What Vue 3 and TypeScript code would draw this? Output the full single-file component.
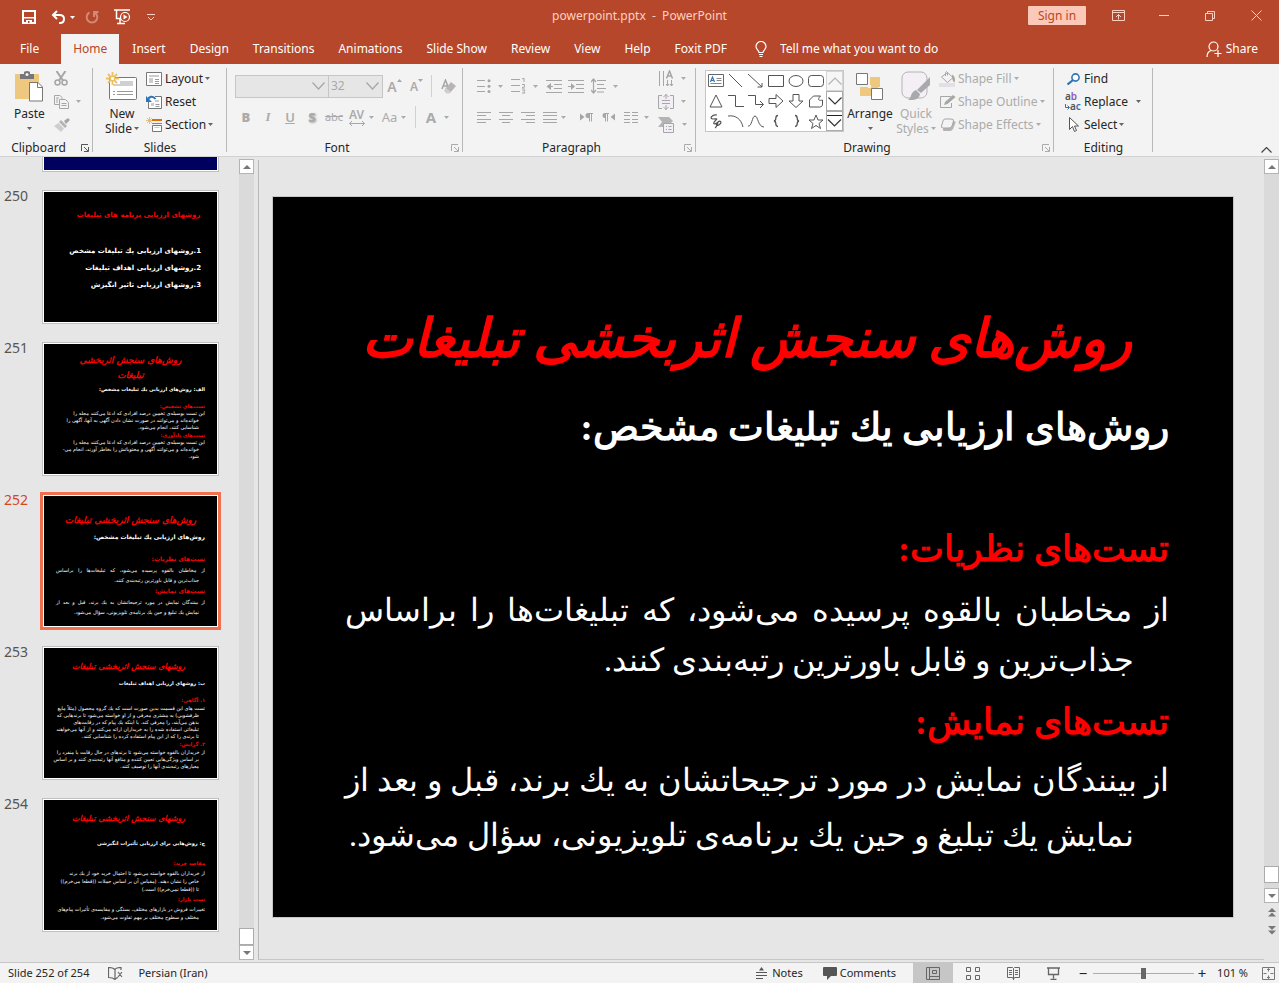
<script setup lang="ts">
import { h, ref } from 'vue'

interface Glyph { w: number; h: number; body: string }

const glyphs: Record<string, Glyph> = {
  save: { w: 14, h: 14, body: '<path d="M1 1h12v12H1z" fill="none" stroke="#fff" stroke-width="2"/><path d="M2 7h10v1.500H2z" fill="#fff"/><path d="M4 10h6v3H4z" fill="#fff"/><path d="M6 11h1.500v2H6z" fill="#b7472a"/>' },
  undo: { w: 15, h: 14, body: '<path d="M6 1L2 5l4 4M2 5h6.500c3 0 4.500 1.500 4.500 4s-1.500 4-4 4H8" fill="none" stroke="#fff" stroke-width="2"/>' },
  redo: { w: 14, h: 14, body: '<path d="M4.500 2.500a5.300 5.300 0 1 0 5 0M9 7V2h4.500" fill="none" stroke="#d08a76" stroke-width="2"/>' },
  present: { w: 17, h: 16, body: '<path d="M0 1h16M2.500 1v8.500H7M6 10v4M3 14.500h8" fill="none" stroke="#fff" stroke-width="1.500"/><circle cx="11" cy="8" r="4.500" fill="#b7472a" stroke="#fff" stroke-width="1.200"/><path d="M9.500 5.500v5l4-2.500z" fill="#fff"/>' },
  custom: { w: 8, h: 7, body: '<path d="M0 .500h8M1 3l3 3 3-3" fill="none" stroke="#fcd0c2"/>' },
  caret: { w: 5, h: 3, body: '<path d="M0 0h5L2.500 3z" fill="currentColor"/>' },
  ribbonOpt: { w: 13, h: 11, body: '<path d="M.500.500h12v10H.500zM.500 2.500h12M6.500 9.500V4.500M4 7l2.500-2.500L9 7" fill="none" stroke="#fcd0c2"/>' },
  min: { w: 10, h: 10, body: '<path d="M0 4.500h10" stroke="#fcd0c2"/>' },
  restore: { w: 10, h: 10, body: '<path d="M.500 2.500h7v7h-7zM2.500 2V.500h7v7H8" fill="none" stroke="#fcd0c2"/>' },
  close: { w: 11, h: 11, body: '<path d="M.500.500l10 10M10.500.500l-10 10" stroke="#fcd0c2" fill="none"/>' },
  bulb: { w: 12, h: 17, body: '<path d="M4 11.500c0-2-3-3-3-6a5 5 0 0 1 10 0c0 3-3 4-3 6zM4 13.500h4M4.500 15.500h3" fill="none" stroke="#fff" stroke-width="1.200"/>' },
  person: { w: 16, h: 17, body: '<circle cx="7.500" cy="5.500" r="4.500" fill="none" stroke="#fff" stroke-width="1.200"/><path d="M1 16c0-4 2-6 4.500-6.500M12 9v7M8.500 12.500h7" fill="none" stroke="#fff" stroke-width="1.200"/>' },
  paste: { w: 28, h: 31, body: '<path d="M0 3h24v25H0z" fill="#edc87e"/><path d="M5 3h4V1.500Q9 0 12 0t3 1.500V3h4v5H5z" fill="#777"/><circle cx="12" cy="3.500" r="1.500" fill="#f3f3f3"/><path d="M14.500 11.500h8.500l4.500 4.500v14h-13z" fill="#fff" stroke="#777"/><path d="M22.500 12v4.500H27" fill="none" stroke="#777"/>' },
  cut: { w: 14, h: 15, body: '<path d="M2.500 0l6.500 9.500M11.500 0L5 9.500" fill="none" stroke="#a6a6a6" stroke-width="2"/><circle cx="3.500" cy="11.500" r="2.500" fill="none" stroke="#a6a6a6" stroke-width="1.500"/><circle cx="10.500" cy="11.500" r="2.500" fill="none" stroke="#a6a6a6" stroke-width="1.500"/>' },
  copy: { w: 15, h: 14, body: '<path d="M6 9.500H.500V.500H6l2 2V4M5.500 4.500h6l3 3v6h-9zM2 3h3M2 5h2M2 7h2M7.500 8.500h5M7.500 10.500h5" fill="none" stroke="#a6a6a6"/>' },
  painter: { w: 16, h: 14, body: '<path d="M10 3l4-3 2 2-4 4z" fill="#a6a6a6"/><path d="M7 2l6 6-2 2-6-6z" fill="#b4b4b4"/><path d="M4.500 5l5.500 5.500L7 14 0 8z" fill="#d0cdd0"/>' },
  newSlide: { w: 31, h: 29, body: '<path d="M3.500 5.500h26q1 0 1 1v20q0 1-1 1h-25q-1 0-1-1z" fill="#fff" stroke="#777"/><path d="M14 9h13v5H7v-2h7z" fill="#d0d0d0"/><path d="M7 19.500h2M11 19.500h16M7 22.500h2M11 22.500h16" stroke="#999"/><path d="M6.500 0v13M0 6.500h13M2 2l9 9M11 2l-9 9" stroke="#edc060" stroke-width="1.800"/><circle cx="6.500" cy="6.500" r="2.200" fill="#fff" stroke="#edc060" stroke-width="1.200"/>' },
  layout: { w: 16, h: 14, body: '<path d="M.500.500h15v13H.500z" fill="#fff" stroke="#777"/><path d="M3 3h10v2H3zM3 6h4v5H3z" fill="#ccc"/><path d="M9 7.500h4M9 9.500h4M9 11.500h4" stroke="#999"/>' },
  reset: { w: 16, h: 14, body: '<path d="M2.500 4.500v9h13v-12H9" fill="#fff" stroke="#777"/><path d="M9 5h4v2H9zM5 8h3v3H5z" fill="#ccc"/><path d="M9.500 9.500h4M9.500 11.500h4" stroke="#999"/><path d="M1.500 5.500C3 1 7 .500 9.500 4" stroke="#2e75b6" stroke-width="2" fill="none"/><path d="M0 1v6h6z" fill="#2e75b6"/>' },
  section: { w: 16, h: 15, body: '<path d="M3.500 0v7M0 3.500h7M1 1l5 5M6 1L1 6" stroke="#edc060"/><path d="M6 3h10" stroke="#e36c0a" stroke-width="2"/><path d="M6 6.500h10" stroke="#e36c0a"/><path d="M6.500 8.500h9v6h-9z" fill="#fff" stroke="#777"/><path d="M8.500 10h5v1h-5z" fill="#ccc"/>' },
  chev: { w: 13, h: 8, body: '<path d="M.500.500l6 6.500 6-6.500" fill="none" stroke="#a6a6a6" stroke-width="1.200"/>' },
  grow: { w: 6, h: 4, body: '<path d="M0 3h5L2.500 0z" fill="#a6a6a6"/>' },
  shrink: { w: 6, h: 4, body: '<path d="M0 0h5L2.500 3z" fill="#a6a6a6"/>' },
  eraser: { w: 15, h: 15, body: '<path d="M1 10L4.500 1l3 8M2 7h4" stroke="#a6a6a6" stroke-width="1.500" fill="none"/><path d="M10 3l5 4-6 7-5-4z" fill="#b8b4b8"/><path d="M4.500 8.500l5 4-1.500 2H5.500L3 12z" fill="#d0ccd0"/>' },
  kern: { w: 16, h: 5, body: '<path d="M.500 2.500h15M3 0L.500 2.500 3 5M13 0l2.500 2.500L13 5" fill="none" stroke="#a6a6a6"/>' },
  bullets: { w: 14, h: 14, body: '<path d="M0 1.500h8M0 7.500h8M0 12.500h8" stroke="#a6a6a6"/><circle cx="12" cy="1.700" r="1.500" fill="#a6a6a6"/><circle cx="12" cy="7.200" r="1.500" fill="#a6a6a6"/><circle cx="12" cy="12.500" r="1.500" fill="#a6a6a6"/>' },
  numbers: { w: 15, h: 16, body: '<path d="M0 1.500h9M0 7.500h9M0 13.500h9M11 1l2-1v4M11 6.500h2.500v2L11 10h3M11 12h3l-1 1.500 1 1.500h-3" fill="none" stroke="#a6a6a6"/>' },
  outdent: { w: 16, h: 13, body: '<path d="M0 .500h16M8 4.500h8M8 8.500h8M0 12.500h16M1 6.500h6" fill="none" stroke="#a6a6a6" stroke-width="1.200"/><path d="M5 3L.500 6.500 5 10z" fill="#a6a6a6"/>' },
  indent: { w: 16, h: 13, body: '<path d="M0 .500h16M8 4.500h8M8 8.500h8M0 12.500h16M0 6.500h6" fill="none" stroke="#a6a6a6" stroke-width="1.200"/><path d="M3 3l4 3.500L3 10z" fill="#a6a6a6"/>' },
  spacing: { w: 15, h: 16, body: '<path d="M6 2.500h9M6 6.500h7M6 10.500h9M6 14h7M2.500 1v14M0 4l2.500-3L5 4M0 12l2.500 3L5 12" fill="none" stroke="#a6a6a6" stroke-width="1.200"/>' },
  alignL: { w: 14, h: 11, body: '<path d="M0 .500h14M0 3.500h9M0 7.500h14M0 10.500h9" stroke="#a6a6a6"/>' },
  alignC: { w: 14, h: 11, body: '<path d="M0 .500h14M3 3.500h8M0 7.500h14M3 10.500h8" stroke="#a6a6a6"/>' },
  alignR: { w: 14, h: 11, body: '<path d="M0 .500h14M5 3.500h9M0 7.500h14M5 10.500h9" stroke="#a6a6a6"/>' },
  alignJ: { w: 14, h: 11, body: '<path d="M0 .500h14M0 3.500h14M0 7.500h14M0 10.500h14" stroke="#a6a6a6"/>' },
  ltr: { w: 13, h: 9, body: '<path d="M0 .500L4.500 4 0 7.500zM9 0v5H8a2.500 2.500 0 0 1 0-5z" fill="#a6a6a6"/><path d="M8 .500h5M9.500.500v8M11.500.500v8" stroke="#a6a6a6"/>' },
  rtl: { w: 13, h: 9, body: '<path d="M13 .500L8.500 4 13 7.500zM3 0v5a2.500 2.500 0 0 1 0-5z" fill="#a6a6a6"/><path d="M2 .500h5M3.500.500v8M5.500.500v8" stroke="#a6a6a6"/>' },
  columns: { w: 14, h: 11, body: '<path d="M0 .500h6M0 3.500h6M0 7.500h6M0 10.500h6M8 .500h6M8 3.500h6M8 7.500h6M8 10.500h6" stroke="#a6a6a6"/>' },
  textDir: { w: 16, h: 17, body: '<path d="M1.500 1v15M5.500 1v15M9.500 10v6M13.500 10v6M8 14l1.500 2 1.500-2M12 14l1.500 2 1.500-2" fill="none" stroke="#a6a6a6"/><path d="M8.500 8.500L11.500 1l3 7.500M9.500 6h4" fill="none" stroke="#a6a6a6" stroke-width="1.500"/>' },
  alignText: { w: 16, h: 16, body: '<path d="M1 2h14v12H1z" fill="#f3edf5"/><path d="M4 1.500H.500v13H4M12 1.500h3.500v13H12M4 6.500h8M4 9.500h8M8 0v5M5.500 3L8 .500 10.500 3M8 16v-5M5.500 13L8 15.500l2.500-2.500" fill="none" stroke="#a6a6a6"/>' },
  smart: { w: 17, h: 16, body: '<path d="M0 0h11l4 4-2 2H7v4H0l4-5z" fill="#b4b4b4"/><path d="M5.500 6.500h10v9h-10z" fill="#f3edf5" stroke="#a6a6a6"/><path d="M8 9.500h1M10.500 9.500h3M8 12.500h1M10.500 12.500h3" stroke="#a6a6a6"/>' },
  textBox: { w: 16, h: 14, body: '<path d="M.500.500h15v12H.500z" fill="none" stroke="#666"/><path d="M2.500 8L4.500 3l2 5M3 6.500h3" stroke="#2e75b6" stroke-width="1.200" fill="none"/><path d="M8.500 4.500h5M8.500 6.500h5M2.500 9.500h11" stroke="#888"/>' },
  line: { w: 16, h: 14, body: '<path d="M1 0l13 13" stroke="#555"/>' },
  lineArrow: { w: 16, h: 14, body: '<path d="M0 0l14 13M14 9v4H9.500" stroke="#555" fill="none"/>' },
  rect: { w: 16, h: 14, body: '<path d="M.500 1.500h15v11H.500z" stroke="#555" fill="none"/>' },
  oval: { w: 16, h: 14, body: '<ellipse cx="8" cy="7" rx="7" ry="5.500" stroke="#555" fill="none"/>' },
  round: { w: 16, h: 14, body: '<rect x=".500" y="1.500" width="15" height="11" rx="3" stroke="#555" fill="none"/>' },
  triangle: { w: 16, h: 14, body: '<path d="M8 1l6 12H2z" stroke="#555" fill="none"/>' },
  elbow: { w: 16, h: 14, body: '<path d="M0 1.500h7.500v11H16" stroke="#555" fill="none"/>' },
  elbowArrow: { w: 16, h: 14, body: '<path d="M0 1.500h7.500v9H15M12 7l3.500 3.500L12 14" stroke="#555" fill="none"/>' },
  arrowR: { w: 16, h: 14, body: '<path d="M1 4.500h7V.500l7 6.500-7 6.500V9.500H1z" stroke="#555" fill="none"/>' },
  arrowD: { w: 16, h: 14, body: '<path d="M5 .500h6V7h4l-7 6.500L1 7h4z" stroke="#555" fill="none"/>' },
  freeform: { w: 16, h: 14, body: '<path d="M1.500 13V6l4-4h7c-4 4-1 5 2 4v4c0 2-1 3-3 3z" stroke="#555" fill="none"/>' },
  scribble: { w: 16, h: 15, body: '<path d="M9 1c-5-1-8 4-4 4s5-1 2 2 0 4 3 1c2-2 4 0 2 2s-5 2-3-1c2-3 0 4-2 5" stroke="#555" fill="none" stroke-width="1.200"/>' },
  curve: { w: 16, h: 14, body: '<path d="M0 2c8-1 13 3 15 11" stroke="#555" fill="none"/>' },
  wave: { w: 16, h: 14, body: '<path d="M0 12c4 1 4-10 7-10s3 11 9 11" stroke="#555" fill="none"/>' },
  braceL: { w: 16, h: 14, body: '<path d="M10 1.500c-4 0-.500 5-4 5.500 3.500.500 0 5.500 4 5.500" stroke="#555" fill="none" stroke-width="1.300"/>' },
  braceR: { w: 16, h: 14, body: '<path d="M7 1.500c4 0 .500 5 4 5.500-3.500.500 0 5.500-4 5.500" stroke="#555" fill="none" stroke-width="1.300"/>' },
  star: { w: 16, h: 15, body: '<path d="M8 1l2 5h5l-4 3.500 1.500 5L8 11.500l-4.500 3 1.500-5L1 6h5z" stroke="#555" fill="none"/>' },
  galUp: { w: 14, h: 8, body: '<path d="M.500 7.500L7 1l6.500 6.500" fill="none" stroke="#b4b4b4" stroke-width="1.200"/>' },
  galDown: { w: 14, h: 8, body: '<path d="M.500.500L7 7 13.500.500" fill="none" stroke="#333" stroke-width="1.200"/>' },
  galMore: { w: 15, h: 14, body: '<path d="M0 1.500h15" stroke="#222"/><path d="M1 5.500L7.500 12 14 5.500" fill="none" stroke="#333" stroke-width="1.200"/>' },
  arrange: { w: 28, h: 28, body: '<path d="M14 4h10v10h-2v9H4V14h10z" fill="#edc87e"/><path d="M12 12h3v3h-3z" fill="#f3f3f3"/><path d="M.500.500h11v11H.500zM15.500 15.500h11v11h-11z" fill="#fff" stroke="#777"/>' },
  quick: { w: 30, h: 31, body: '<rect x="1" y="1" width="25" height="26" rx="6" fill="#f3eff5" stroke="#b4b4b4"/><path d="M29 6v8l-9 8-4-3z" fill="#a9a9ad"/><path d="M15 19l4 4c-1 6-6 6-12 6 4-2 2-8 8-10z" fill="#a9a9ad"/>' },
  fill: { w: 17, h: 16, body: '<path d="M0 12h16v4H0z" fill="#e4dfe6"/><path d="M2.500 6l6-4.500L14 6.500l-5.500 5zM6.500 5V1.500Q7.500-.500 8.500 1.500v3" fill="#f3f3f3" stroke="#a6a6a6"/><path d="M13 3.500c3 1.500 3.500 5 2.500 8-2-1-2.500-4-2.500-8z" fill="#a6a6a6"/>' },
  outline: { w: 16, h: 14, body: '<path d="M11 1.500H.500v11h11V8" fill="none" stroke="#a6a6a6"/><path d="M4 10l1-3 8-7 2.500 2-8 7z" fill="#a6a6a6"/>' },
  effects: { w: 16, h: 14, body: '<path d="M4 3h10q2 0 1.500 2L13 11q-1 2-3 2H3z" fill="#b4b4b4"/><path d="M5 1h6q3 0 2.500 2L12 8q-1 2-3 2H3Q1 10 1.500 8L3 3q.500-2 2-2z" fill="#f3f3f3" stroke="#a6a6a6"/>' },
  find: { w: 13, h: 12, body: '<circle cx="8.500" cy="4.500" r="3.600" fill="#fff" stroke="#2e75b6" stroke-width="1.600"/><path d="M6 7l-5.500 4.500" stroke="#2e75b6" stroke-width="2.200"/>' },
  hook: { w: 5, h: 6, body: '<path d="M.500 0v3.500h3.500M2.500 1.500l2 2-2 2" fill="none" stroke="#2e75b6"/>' },
  cursor: { w: 10, h: 15, body: '<path d="M.500.500v12l3-3 2 5 2-1-2-4.500h4z" fill="#fff" stroke="#555"/>' },
  up: { w: 8, h: 4, body: '<path d="M0 4h8L4 0z" fill="#777"/>' },
  down: { w: 8, h: 4, body: '<path d="M0 0h8L4 4z" fill="#777"/>' },
  dblUp: { w: 8, h: 9, body: '<path d="M0 4h8L4 0zM0 8.500h8L4 4.500z" fill="#777"/>' },
  dblDown: { w: 8, h: 9, body: '<path d="M0 0h8L4 4zM0 4.500h8L4 8.500z" fill="#777"/>' },
  launcher: { w: 8, h: 8, body: '<path d="M7 .500H.500V7M3 3l4 4M7.500 3v4.500H3" fill="none" stroke="currentColor"/>' },
  collapse: { w: 11, h: 6, body: '<path d="M.500 5.500l5-5 5 5" fill="none" stroke="#444" stroke-width="1.200"/>' },
  spell: { w: 15, h: 13, body: '<path d="M7 12.500V2.500Q5 .500.500.500v10Q5 10.500 7 12.500Q8 11 10 10.500M7 2.500Q8 .500 13 .500V3M10 5l4 5M14 5l-4 5" fill="none" stroke="#666" stroke-width="1.200"/>' },
  notes: { w: 11, h: 12, body: '<path d="M3 3.500h5L5.500 0zM0 5h11v1H0zM0 8h11v1H0zM0 11h7v1H0z" fill="#555"/>' },
  comment: { w: 14, h: 13, body: '<path d="M1 0h12q1 0 1 1v7q0 1-1 1H8l-4 4V9H1Q0 9 0 8V1q0-1 1-1z" fill="#555"/>' },
  normal: { w: 14, h: 13, body: '<path d="M.500.500h13v12H.500zM3.500.500v12M3.500 9.500h10M6.500 3.500h4v3h-4z" fill="none" stroke="#666"/>' },
  sorter: { w: 14, h: 13, body: '<path d="M.500.500h4v4h-4zM9.500.500h4v4h-4zM.500 8.500h4v4h-4zM9.500 8.500h4v4h-4z" fill="none" stroke="#666"/>' },
  reading: { w: 13, h: 13, body: '<path d="M6.500 2v11M.500.500h5l1 1 1-1h5v10h-5l-1 2-1-2h-5zM2 3.500h3M2 5.500h3M2 7.500h3M8 3.500h3M8 5.500h3M8 7.500h3" fill="none" stroke="#666"/>' },
  show: { w: 13, h: 13, body: '<path d="M0 1h13M1.500 1.500v6h10v-6M6.500 7.500v4M3.500 12.500h6" fill="none" stroke="#666" stroke-width="1.300"/>' },
  fit: { w: 13, h: 13, body: '<path d="M.500.500h12v12H.500zM6.500 1.500v3M6.500 8.500v3M1.500 6.500h3M8.500 6.500h3M5 3l1.500-1.500L8 3M5 10l1.500 1.500L8 10" fill="none" stroke="#777"/>' },
}

const Ico = (p: { n: string }) => {
  const d = glyphs[p.n]
  return h('svg', { width: d.w, height: d.h, viewBox: `0 0 ${d.w} ${d.h}`, 'aria-hidden': 'true', class: ['ico', 'ico-' + p.n], innerHTML: d.body })
}
Ico.props = ['n']

const tabs = ['File', 'Home', 'Insert', 'Design', 'Transitions', 'Animations', 'Slide Show', 'Review', 'View', 'Help', 'Foxit PDF']
const activeTab = ref('Home')
const shapes = ['textBox', 'line', 'lineArrow', 'rect', 'oval', 'round', 'triangle', 'elbow', 'elbowArrow', 'arrowR', 'arrowD', 'freeform', 'scribble', 'curve', 'wave', 'braceL', 'braceR', 'star']

type Kind = 'title' | 'sub' | 'head' | 'first' | 'rest' | 'num'
interface Thumb { no: number; lines: [Kind, string][] }

const thumbs: Thumb[] = [
  { no: 249, lines: [] },
  { no: 250, lines: [
    ['title', 'روشهای ارزیابی برنامه های تبلیغات'],
    ['num', '1.روشهای ارزیابی یك تبلیغات مشخص'],
    ['num', '2.روشهای ارزیابی اهداف تبلیغات'],
    ['num', '3.روشهای ارزیابی تاثیر انگیزش'],
  ] },
  { no: 251, lines: [
    ['title', 'روش‌های سنجش اثربخشی'],
    ['title', 'تبلیغات'],
    ['sub', 'الف: روش‌های ارزیابی یك تبلیغات مشخص:'],
    ['head', 'تست‌های تشخیص:'],
    ['first', 'این تست بوسیله‌ی تخمین درصد افرادی که ادعا می‌کنند مجله را'],
    ['rest', 'خوانده‌اند و می‌توانند در صورت نشان دادن آگهی به آنها، آگهی را'],
    ['rest', 'شناسایی کنند، انجام می‌شود.'],
    ['head', 'تست‌های یادآوری:'],
    ['first', 'این تست بوسیله‌ی تخمین درصد افرادی که ادعا می‌کنند مجله را'],
    ['rest', 'خوانده‌اند و می‌توانند آگهی و محتویاتش را بخاطر آورند، انجام می-'],
    ['rest', 'شود.'],
  ] },
  { no: 252, lines: [
    ['title', 'روش‌های سنجش اثربخشی تبلیغات'],
    ['sub', 'روش‌های ارزیابی یك تبلیغات مشخص:'],
    ['head', 'تست‌های نظریات:'],
    ['first', 'از مخاطبان بالقوه پرسیده می‌شود، که تبلیغات‌ها را براساس'],
    ['rest', 'جذاب‌ترین و قابل باورترین رتبه‌بندی کنند.'],
    ['head', 'تست‌های نمایش:'],
    ['first', 'از بینندگان نمایش در مورد ترجیحاتشان به یك برند، قبل و بعد از'],
    ['rest', 'نمایش یك تبلیغ و حین یك برنامه‌ی تلویزیونی، سؤال می‌شود.'],
  ] },
  { no: 253, lines: [
    ['title', 'روشهای سنجش اثربخشی تبلیغات'],
    ['sub', 'ب: روشهای ارزیابی اهداف تبلیغات'],
    ['head', '۱. آگاهی:'],
    ['first', 'تست های این قسمت بدین صورت است که یك گروه محصول (مثلاً مایع'],
    ['rest', 'ظرفشویی) به مشتری معرفی و از او خواسته می‌شود تا برندهایی که'],
    ['rest', 'بذهن می‌آیند، را معرفی کند. یا اینکه یك پیام که در رقابت‌های'],
    ['rest', 'تبلیغاتی استفاده شده را به خریداران ارائه می‌کنند و از آنها می‌خواهند'],
    ['rest', 'تا برندی را که از این پیام استفاده کرده را شناسایی کنند.'],
    ['head', '۲. گرایش:'],
    ['first', 'از خریداران بالقوه خواسته می‌شود تا برندهای در حال رقابت یا منفرد را'],
    ['rest', 'بر اساس ویژگی‌هایی تعیین کننده و منافع آنها رتبه‌بندی کنند و بر اساس'],
    ['rest', 'معیارهای رتبه‌بندی آنها را توصیف کنند.'],
  ] },
  { no: 254, lines: [
    ['title', 'روشهای سنجش اثربخشی تبلیغات'],
    ['sub', 'ج: روش‌هایی برای ارزیابی تأثیرات انگیزشی'],
    ['head', 'مقاصد خرید:'],
    ['first', 'از خریداران بالقوه خواسته می‌شود تا احتمال خرید خود از یك برند'],
    ['rest', 'خاص را نشان دهند. (مقیاس آن بر اساس جملات ((قطعا می‌خرم))'],
    ['rest', 'تا ((قطعا نمی‌خرم)) است.)'],
    ['head', 'تست بازار:'],
    ['first', 'تغییرات فروش در بازارهای مختلف، بستگی و مقایسه‌ی تأثیرات پیام‌های'],
    ['rest', 'مختلف و سطوح مختلف بر مهم تفاوت می‌شود.'],
  ] },
]
const selected = ref(252)
const zoom = ref(101)
</script>

<template>
  <div class="app">
    <header class="titlebar">
      <div class="quick-access">
        <button aria-label="Save" class="qa-save"><Ico n="save" /></button>
        <button aria-label="Undo" class="qa-undo"><Ico n="undo" /><Ico n="caret" /></button>
        <button aria-label="Redo" class="qa-redo"><Ico n="redo" /></button>
        <button aria-label="Start from beginning" class="qa-present"><Ico n="present" /></button>
        <button aria-label="Customize toolbar"><Ico n="custom" /></button>
      </div>
      <h1 class="doc-title">powerpoint.pptx&nbsp; -&nbsp; PowerPoint</h1>
      <div class="window-tools">
        <button class="sign-in">Sign in</button>
        <button class="win" aria-label="Ribbon display options"><Ico n="ribbonOpt" /></button>
        <button class="win" aria-label="Minimize"><Ico n="min" /></button>
        <button class="win" aria-label="Restore"><Ico n="restore" /></button>
        <button class="win" aria-label="Close"><Ico n="close" /></button>
      </div>
    </header>

    <nav class="tabs">
      <button v-for="t in tabs" :key="t" class="tab" :class="{ active: t === activeTab, file: t === 'File' }" @click="activeTab = t">{{ t }}</button>
      <label class="tell"><Ico n="bulb" /><input type="text" placeholder="Tell me what you want to do" aria-label="Tell me what you want to do"></label>
      <button class="share"><Ico n="person" />Share</button>
    </nav>

    <div class="ribbon">
      <section class="group clipboard">
        <div class="tools">
          <button class="big"><span class="pic"><Ico n="paste" /></span><span>Paste</span><span class="drop"><Ico n="caret" /></span></button>
          <div class="rows mini">
            <button disabled aria-label="Cut"><Ico n="cut" /></button>
            <button disabled aria-label="Copy"><Ico n="copy" /><Ico n="caret" /></button>
            <button disabled aria-label="Format painter"><Ico n="painter" /></button>
          </div>
        </div>
        <footer><h2>Clipboard</h2><button class="launch" aria-label="Clipboard options"><Ico n="launcher" /></button></footer>
      </section>

      <section class="group slides">
        <div class="tools">
          <button class="big"><span class="pic"><Ico n="newSlide" /></span><span>New</span><span>Slide<Ico n="caret" /></span></button>
          <div class="rows">
            <button><i><Ico n="layout" /></i>Layout<Ico n="caret" /></button>
            <button><i><Ico n="reset" /></i>Reset</button>
            <button><i><Ico n="section" /></i>Section<Ico n="caret" /></button>
          </div>
        </div>
        <footer><h2>Slides</h2></footer>
      </section>

      <section class="group font">
        <div class="lines">
          <div class="line combos">
            <span class="combo family"><select disabled aria-label="Font"><option></option></select><Ico n="chev" /></span>
            <span class="combo size"><select disabled aria-label="Font size"><option>32</option></select><Ico n="chev" /></span>
            <button disabled class="cell letter larger" aria-label="Increase font size">A<Ico n="grow" /></button>
            <button disabled class="cell letter smaller" aria-label="Decrease font size">A<Ico n="shrink" /></button>
            <button disabled class="cell erase" aria-label="Clear formatting"><Ico n="eraser" /></button>
          </div>
          <div class="line format">
            <button disabled class="cell"><b>B</b></button>
            <button disabled class="cell"><em>I</em></button>
            <button disabled class="cell"><u>U</u></button>
            <button disabled class="cell shadow"><b>S</b></button>
            <button disabled class="cell"><s>abc</s></button>
            <button disabled class="cell wide av"><span>AV<Ico n="kern" /></span><Ico n="caret" /></button>
            <button disabled class="cell wide aa">Aa<Ico n="caret" /></button>
            <button disabled class="cell wide colour"><b>A</b><Ico n="caret" /></button>
          </div>
        </div>
        <footer><h2>Font</h2><button disabled class="launch" aria-label="Font options"><Ico n="launcher" /></button></footer>
      </section>

      <section class="group paragraph">
        <div class="tools">
          <div class="lines">
            <div class="line top">
              <button disabled class="split" aria-label="Bullets"><Ico n="bullets" /><Ico n="caret" /></button>
              <button disabled class="split" aria-label="Numbering"><Ico n="numbers" /><Ico n="caret" /></button>
              <button disabled class="cell" aria-label="Decrease indent"><Ico n="outdent" /></button>
              <button disabled class="cell" aria-label="Increase indent"><Ico n="indent" /></button>
              <button disabled class="split" aria-label="Line spacing"><Ico n="spacing" /><Ico n="caret" /></button>
            </div>
            <div class="line">
              <button disabled class="cell" aria-label="Align left"><Ico n="alignL" /></button>
              <button disabled class="cell" aria-label="Center"><Ico n="alignC" /></button>
              <button disabled class="cell" aria-label="Align right"><Ico n="alignR" /></button>
              <button disabled class="split just" aria-label="Justify"><Ico n="alignJ" /><Ico n="caret" /></button>
              <button disabled class="cell" aria-label="Left to right"><Ico n="ltr" /></button>
              <button disabled class="cell" aria-label="Right to left"><Ico n="rtl" /></button>
              <button disabled class="split cols" aria-label="Columns"><Ico n="columns" /><Ico n="caret" /></button>
            </div>
          </div>
          <div class="rows mini">
            <button disabled aria-label="Text direction"><Ico n="textDir" /><Ico n="caret" /></button>
            <button disabled aria-label="Align text"><Ico n="alignText" /><Ico n="caret" /></button>
            <button disabled aria-label="Convert to SmartArt"><Ico n="smart" /><Ico n="caret" /></button>
          </div>
        </div>
        <footer><h2>Paragraph</h2><button disabled class="launch" aria-label="Paragraph options"><Ico n="launcher" /></button></footer>
      </section>

      <section class="group drawing">
        <div class="tools">
          <div class="gallery">
            <div class="shapes">
              <button v-for="s in shapes" :key="s" :aria-label="s"><Ico :n="s" /></button>
            </div>
            <div class="gal-nav">
              <button disabled aria-label="Previous shapes"><Ico n="galUp" /></button>
              <button aria-label="Next shapes"><Ico n="galDown" /></button>
              <button aria-label="More shapes"><Ico n="galMore" /></button>
            </div>
          </div>
          <button class="big arrange-btn"><span class="pic"><Ico n="arrange" /></span><span>Arrange</span><span class="drop"><Ico n="caret" /></span></button>
          <button disabled class="big quick-btn"><span class="pic"><Ico n="quick" /></span><span>Quick</span><span>Styles<Ico n="caret" /></span></button>
          <div class="rows">
            <button disabled><i><Ico n="fill" /></i>Shape Fill<Ico n="caret" /></button>
            <button disabled><i><Ico n="outline" /></i>Shape Outline<Ico n="caret" /></button>
            <button disabled><i><Ico n="effects" /></i>Shape Effects<Ico n="caret" /></button>
          </div>
        </div>
        <footer><h2>Drawing</h2><button disabled class="launch" aria-label="Drawing options"><Ico n="launcher" /></button></footer>
      </section>

      <section class="group editing">
        <div class="tools">
          <div class="rows">
            <button><i><Ico n="find" /></i>Find</button>
            <button class="replace"><i class="abac"><span>a<b>b</b></span><span><Ico n="hook" />a<em>c</em></span></i>Replace<Ico n="caret" /></button>
            <button><i><Ico n="cursor" /></i>Select<Ico n="caret" /></button>
          </div>
        </div>
        <footer><h2>Editing</h2></footer>
      </section>
      <button class="collapse-btn" aria-label="Collapse the ribbon"><Ico n="collapse" /></button>
    </div>

    <main class="work">
      <aside class="panel">
        <ol>
          <li v-for="t in thumbs" :key="t.no" :class="{ on: t.no === selected }">
            <span v-if="t.lines.length" class="no">{{ t.no }}</span>
            <button class="thumb" :class="'s' + t.no" :aria-label="'Slide ' + t.no" dir="rtl" @click="selected = t.no">
              <span v-for="(l, i) in t.lines" :key="i" :class="l[0]">{{ l[1] }}</span>
            </button>
          </li>
        </ol>
      </aside>
      <div class="scroll left-scroll">
        <button aria-label="Scroll up"><Ico n="up" /></button>
        <span class="grip"></span>
        <button aria-label="Scroll down"><Ico n="down" /></button>
      </div>
      <div class="canvas">
        <article class="slide" dir="rtl" lang="fa">
          <h2>روش‌های سنجش اثربخشی تبلیغات</h2>
          <h3 class="intro">روش‌های ارزیابی یك تبلیغات مشخص:</h3>
          <h3>تست‌های نظریات:</h3>
          <p><span class="full">از مخاطبان بالقوه پرسیده می‌شود، که تبلیغات‌ها را براساس</span><span class="in">جذاب‌ترین و قابل باورترین رتبه‌بندی کنند.</span></p>
          <h3>تست‌های نمایش:</h3>
          <p class="last"><span class="full">از بینندگان نمایش در مورد ترجیحاتشان به یك برند، قبل و بعد از</span><span class="in">نمایش یك تبلیغ و حین یك برنامه‌ی تلویزیونی، سؤال می‌شود.</span></p>
        </article>
      </div>
      <div class="scroll right-scroll">
        <button aria-label="Scroll up"><Ico n="up" /></button>
        <span class="grip"></span>
        <button aria-label="Scroll down"><Ico n="down" /></button>
        <button class="bare" aria-label="Previous slide"><Ico n="dblUp" /></button>
        <button class="bare" aria-label="Next slide"><Ico n="dblDown" /></button>
      </div>
    </main>

    <footer class="status">
      <span class="count">Slide {{ selected }} of 254</span>
      <button class="spell-btn" aria-label="Spelling"><Ico n="spell" /></button>
      <button class="lang">Persian (Iran)</button>
      <button class="notes-btn"><Ico n="notes" />Notes</button>
      <button class="comments"><Ico n="comment" />Comments</button>
      <button class="view on" aria-label="Normal"><Ico n="normal" /></button>
      <button class="view" aria-label="Slide sorter"><Ico n="sorter" /></button>
      <button class="view" aria-label="Reading view"><Ico n="reading" /></button>
      <button class="view" aria-label="Slide show"><Ico n="show" /></button>
      <button class="step" aria-label="Zoom out" @click="zoom--">−</button>
      <input v-model.number="zoom" type="range" min="2" max="200" aria-label="Zoom">
      <button class="step" aria-label="Zoom in" @click="zoom++">+</button>
      <button class="pct">{{ zoom }} %</button>
      <button class="fit-btn" aria-label="Fit slide to window"><Ico n="fit" /></button>
    </footer>
  </div>
</template>

<style>
body { margin: 0; }
</style>

<style scoped>
* { box-sizing: border-box; }
.app { height: 100vh; display: flex; flex-direction: column; overflow: hidden; background: #e6e6e6; color: #262626; font: 12px/16px "Noto Sans", "Open Sans", sans-serif; }
button, input, select { font: inherit; color: inherit; background: none; border: 0; padding: 0; margin: 0; }
button { display: flex; align-items: center; white-space: nowrap; }
h1, h2, h3, p, ol { margin: 0; padding: 0; font: inherit; }
ol { list-style: none; }
.ico { flex: none; display: block; }

.titlebar { flex: none; height: 34px; display: grid; grid-template-columns: 1fr auto 1fr; background: #b7472a; color: #fcd0c2; }
.quick-access { display: flex; padding-left: 22px; color: #fff; }
.qa-save { margin-right: 15px; }
.qa-undo { gap: 4px; margin-right: 10px; }
.qa-redo { margin-right: 15px; }
.qa-present { margin-right: 16px; }
.doc-title { line-height: 32px; }
.window-tools { display: flex; justify-content: flex-end; height: 31px; }
.sign-in { align-self: center; width: 58px; height: 19px; justify-content: center; margin-right: 9px; border-radius: 1px; background: #fcc9b8; color: #b7472a; }
.win { width: 46px; justify-content: center; }

.tabs { flex: none; height: 30px; display: flex; background: #b7472a; color: #fff; }
.tab { padding: 0 12px; justify-content: center; }
.tab.file { padding: 0 22px 0 20px; }
.tab.active { background: #f3f3f3; color: #b7472a; margin-right: 1px; }
.tell { display: flex; align-items: center; gap: 13px; margin-left: 16px; }
.tell input { width: 176px; outline: 0; }
.tell input::placeholder { color: #fff; opacity: 1; }
.share { margin-left: auto; gap: 4px; padding-right: 21px; }

.ribbon { flex: none; height: 93px; display: flex; background: #f3f3f3; border-bottom: 1px solid #d2d2d2; }
.group { position: relative; display: grid; grid-template-rows: 73px 16px; margin-top: 3px; }
.group::after { content: ""; position: absolute; right: 0; top: 1px; bottom: 4px; width: 1px; background: #b8b8b8; }
.group > footer { display: flex; justify-content: center; align-items: center; position: relative; padding-right: 16px; }
.group h2 { line-height: 16px; }
.launch { position: absolute; right: 4px; top: 4px; color: #555; }
.tools { display: flex; }
.ribbon .ico-caret { color: #666; }
button:disabled, .ribbon button:disabled .ico-caret { color: #ababab; }
.big { flex-direction: column; text-align: center; line-height: 15px; align-self: flex-start; }
.big > span { display: flex; align-items: center; gap: 2px; height: 15px; }
.big > .pic { height: 39px; justify-content: center; }
.rows { display: flex; flex-direction: column; }
.rows button { height: 23px; gap: 2px; }
.rows i { width: 17px; display: flex; justify-content: center; font-style: normal; }
.rows.mini button { gap: 7px; }
.clipboard { width: 93px; }
.clipboard .tools { padding-left: 14px; }
.clipboard .mini { padding-left: 9px; }
.slides { width: 134px; }
.slides .tools { padding-left: 12px; gap: 7px; }
.group.slides > footer, .group.editing > footer { padding-right: 0; }
.font { width: 236px; }
.lines { display: flex; flex-direction: column; padding-top: 7px; color: #a6a6a6; }
.line { display: flex; align-items: center; height: 24px; margin-bottom: 7px; }
.font .lines { padding-left: 8px; }
.combo { display: grid; align-items: center; height: 23px; border: 1px solid #c6c6c6; background: #e6e6e6; }
.combo > * { grid-area: 1 / 1; }
.combo > svg { justify-self: end; margin-right: 3px; }
.combo select { appearance: none; width: 100%; height: 100%; opacity: 1; color: #a9a9a9; padding-left: 2px; }
.family { width: 94px; }
.size { width: 54px; border-left: 0; }
.cell { width: 22px; height: 22px; justify-content: center; }
.letter { font-size: 14px; font-weight: 600; align-items: flex-start; padding-top: 4px; }
.letter.larger { margin-left: 1px; }
.letter.smaller { font-size: 12px; }
.erase { width: 32px; margin-left: 3px; border-left: 1px solid #d0d0d0; padding-left: 1px; }
.format .cell { font-size: 13px; font-weight: 600; }
.format em { font-family: "Liberation Serif", serif; font-weight: 700; }
.shadow { text-shadow: 1px 1px 2px #aaa; }
.format .cell s { font-size: 11px; font-weight: 400; }
.format .cell.wide { width: 32px; gap: 4px; font-weight: 400; }
.av span { font-size: 12px; line-height: 12px; font-weight: 600; }
.format .cell.aa { width: 38px; padding-right: 4px; }
.format .cell.colour { border-left: 1px solid #d0d0d0; width: 44px; gap: 8px; font-size: 15px; }
.paragraph { width: 233px; }
.paragraph .lines { padding-left: 10px; width: 195px; }
.split { width: 34px; height: 22px; gap: 7px; padding-left: 3px; }
.top .cell:nth-of-type(3) { margin-left: 2px; }
.top .split { padding-left: 4px; }
.just { width: 36px; gap: 4px; padding-left: 4px; }
.cols { gap: 6px; padding-left: 5px; }
.drawing { width: 358px; }
.drawing .tools { padding-left: 9px; }
.gallery { display: flex; height: 62px; margin-top: 3px; border: 1px solid #c6c6c6; background: #fff; }
.shapes { display: grid; grid-template-columns: repeat(6, 20px); grid-template-rows: repeat(3, 20px); }
.shapes button { justify-content: center; }
.gal-nav { display: grid; grid-template-rows: repeat(3, 20px); width: 17px; }
.gal-nav button { justify-content: center; border: 1px solid #ababab; }
.gal-nav button:disabled { border-color: #d6d6d6; background: #f6f6f6; }
.arrange-btn { width: 52px; }
.quick-btn { width: 40px; }
.drawing .rows { padding-left: 3px; }
.editing { width: 99px; }
.editing .tools { padding-left: 11px; }
.rows .replace > .ico-caret { margin-left: 6px; }
.rows i.abac { flex-direction: column; font-size: 10px; line-height: 9px; font-weight: 600; color: #555; }
.abac span { display: flex; align-items: center; height: 10px; }
.abac b { color: #8e5bb5; font-weight: 600; }
.abac em { color: #2e75b6; font-style: normal; }
.collapse-btn { margin: auto 7px 3px auto; }

.work { flex: 1; min-height: 0; display: flex; }
.panel { flex: none; width: 239px; overflow: hidden; }
.panel ol { height: 100%; display: flex; flex-direction: column; justify-content: flex-end; gap: 18px; padding-bottom: 30px; }
.panel li { flex: none; display: flex; align-items: flex-start; justify-content: flex-end; height: 134px; padding-right: 20px; }
.no { width: 42px; padding-left: 4px; margin-right: auto; font-size: 14px; line-height: 12px; color: #555; }
.on .no { color: #d24726; }
.thumb { flex: none; flex-direction: column; align-items: stretch; width: 177px; height: 134px; border: 1px solid #c0c0c0; outline: 0 solid #f07050; background: #000; box-shadow: inset 0 0 0 1px #fff; padding: 1px 13px; color: #fff; font-family: "DejaVu Sans", sans-serif; font-size: 5px; line-height: 7px; text-align: right; overflow: hidden; }
.on .thumb { border-color: #f07050; outline-width: 2px; }
.thumb span { flex: none; display: block; white-space: nowrap; text-align: start; }
.thumb.s249 { background: #00005f; }
.thumb .title { text-align: center; color: #f00; font-size: 8px; font-weight: 700; font-style: italic; line-height: 15px; padding-right: 4px; }
.thumb .head { color: #f00; font-weight: 700; }
.thumb .rest { padding-right: 6px; }
.thumb .sub { font-weight: 700; }
.thumb .num { font-size: 7px; font-weight: 700; line-height: 17px; padding-right: 4px; }
.thumb.s250 { padding-top: 17px; }
.thumb.s250 .title { font-style: normal; font-size: 7px; margin-bottom: 20px; padding: 0 0 0 16px; }
.thumb.s251 { padding-top: 10px; }
.thumb.s251 .title, .thumb.s252 .title { font-size: 9px; padding-right: 0; }
.s251 .sub { margin: 3px 0 9px; }
.s251 .head { line-height: 8px; }
.thumb.s252 { padding-top: 18px; }
.thumb.s252 .sub { margin: 4px 0 11px; line-height: 10px; font-size: 6px; }
.thumb.s252 .head { line-height: 12px; font-size: 6px; }
.thumb.s252 .first { text-align-last: justify; }
.thumb.s252 .first, .thumb.s252 .rest { line-height: 10px; }
.thumb.s253 { padding-top: 12px; }
.s253 .sub { margin: 6px 0 9px; }
.s253 .head { line-height: 9px; }
.thumb.s254 { padding-top: 12px; }
.s254 .sub { margin: 14px 0 10px; }
.s254 .head { line-height: 12px; }
.thumb.s254 .first, .thumb.s254 .rest { line-height: 8px; }

.scroll { flex: none; width: 15px; margin: 2px 0 2px; display: flex; flex-direction: column; background: #dadada; }
.scroll button { flex: none; height: 15px; justify-content: center; background: #fff; border: 1px solid #b4b4b4; }
.grip { height: 17px; margin-top: auto; background: #fff; border: 1px solid #ababab; }
.right-scroll { margin-bottom: 23px; background: linear-gradient(#dadada, #dadada) top / 100% calc(100% - 36px) no-repeat; }
.right-scroll .grip { margin-bottom: 5px; }
.scroll .bare { background: none; border: 0; height: 18px; }
.canvas { flex: 1; display: flex; align-items: center; justify-content: center; margin: 3px 0 2px 4px; border-left: 1px solid #b8b8b8; border-bottom: 1px solid #c6c6c6; padding: 0 17px 6px 0; }
.slide { width: 962px; height: 722px; border: 1px solid #c6c6c6; background: #000; color: #fff; font-family: "Liberation Serif", serif; padding: 110px 64px 0 72px; white-space: nowrap; }
.slide h2 { text-align: center; color: #f00; font-size: 54px; line-height: 64px; font-weight: 700; font-style: italic; padding-right: 20px; }
.slide h3 { font-size: 36px; line-height: 58px; font-weight: 700; color: #f00; }
.slide .intro { color: #fff; font-size: 38px; margin: 27px 0 64px; }
.slide p { font-size: 32px; line-height: 50px; padding: 7px 0 8px; }
.slide .last { line-height: 55px; padding: 2px 0 0; }
.full, .in { display: block; }
.full { text-align-last: justify; }
.in { padding-right: 35px; }

.status { flex: none; height: 21px; display: flex; align-items: stretch; background: #f3f3f3; border-top: 1px solid #c6c6c6; padding-left: 8px; font-size: 11px; line-height: 20px; }
.spell-btn { margin: 0 15px 0 19px; }
.notes-btn { margin-left: auto; gap: 5px; }
.comments { gap: 3px; margin: 0 17px 0 20px; }
.view { width: 40px; justify-content: center; }
.view.on { background: #c6c6c6; }
.step { width: 14px; justify-content: center; font-size: 15px; }
.view + .step { margin-left: 3px; }
.status input { appearance: none; width: 101px; margin: 0 1px 0 3px; }
.status input::-webkit-slider-runnable-track { height: 11px; background: linear-gradient(#ababab, #ababab) center / 100% 1px no-repeat; }
.status input::-webkit-slider-thumb { appearance: none; width: 5px; height: 11px; background: #666; }
.pct { margin: 0 14px 0 8px; }
.fit-btn { margin-right: 4px; }
</style>
